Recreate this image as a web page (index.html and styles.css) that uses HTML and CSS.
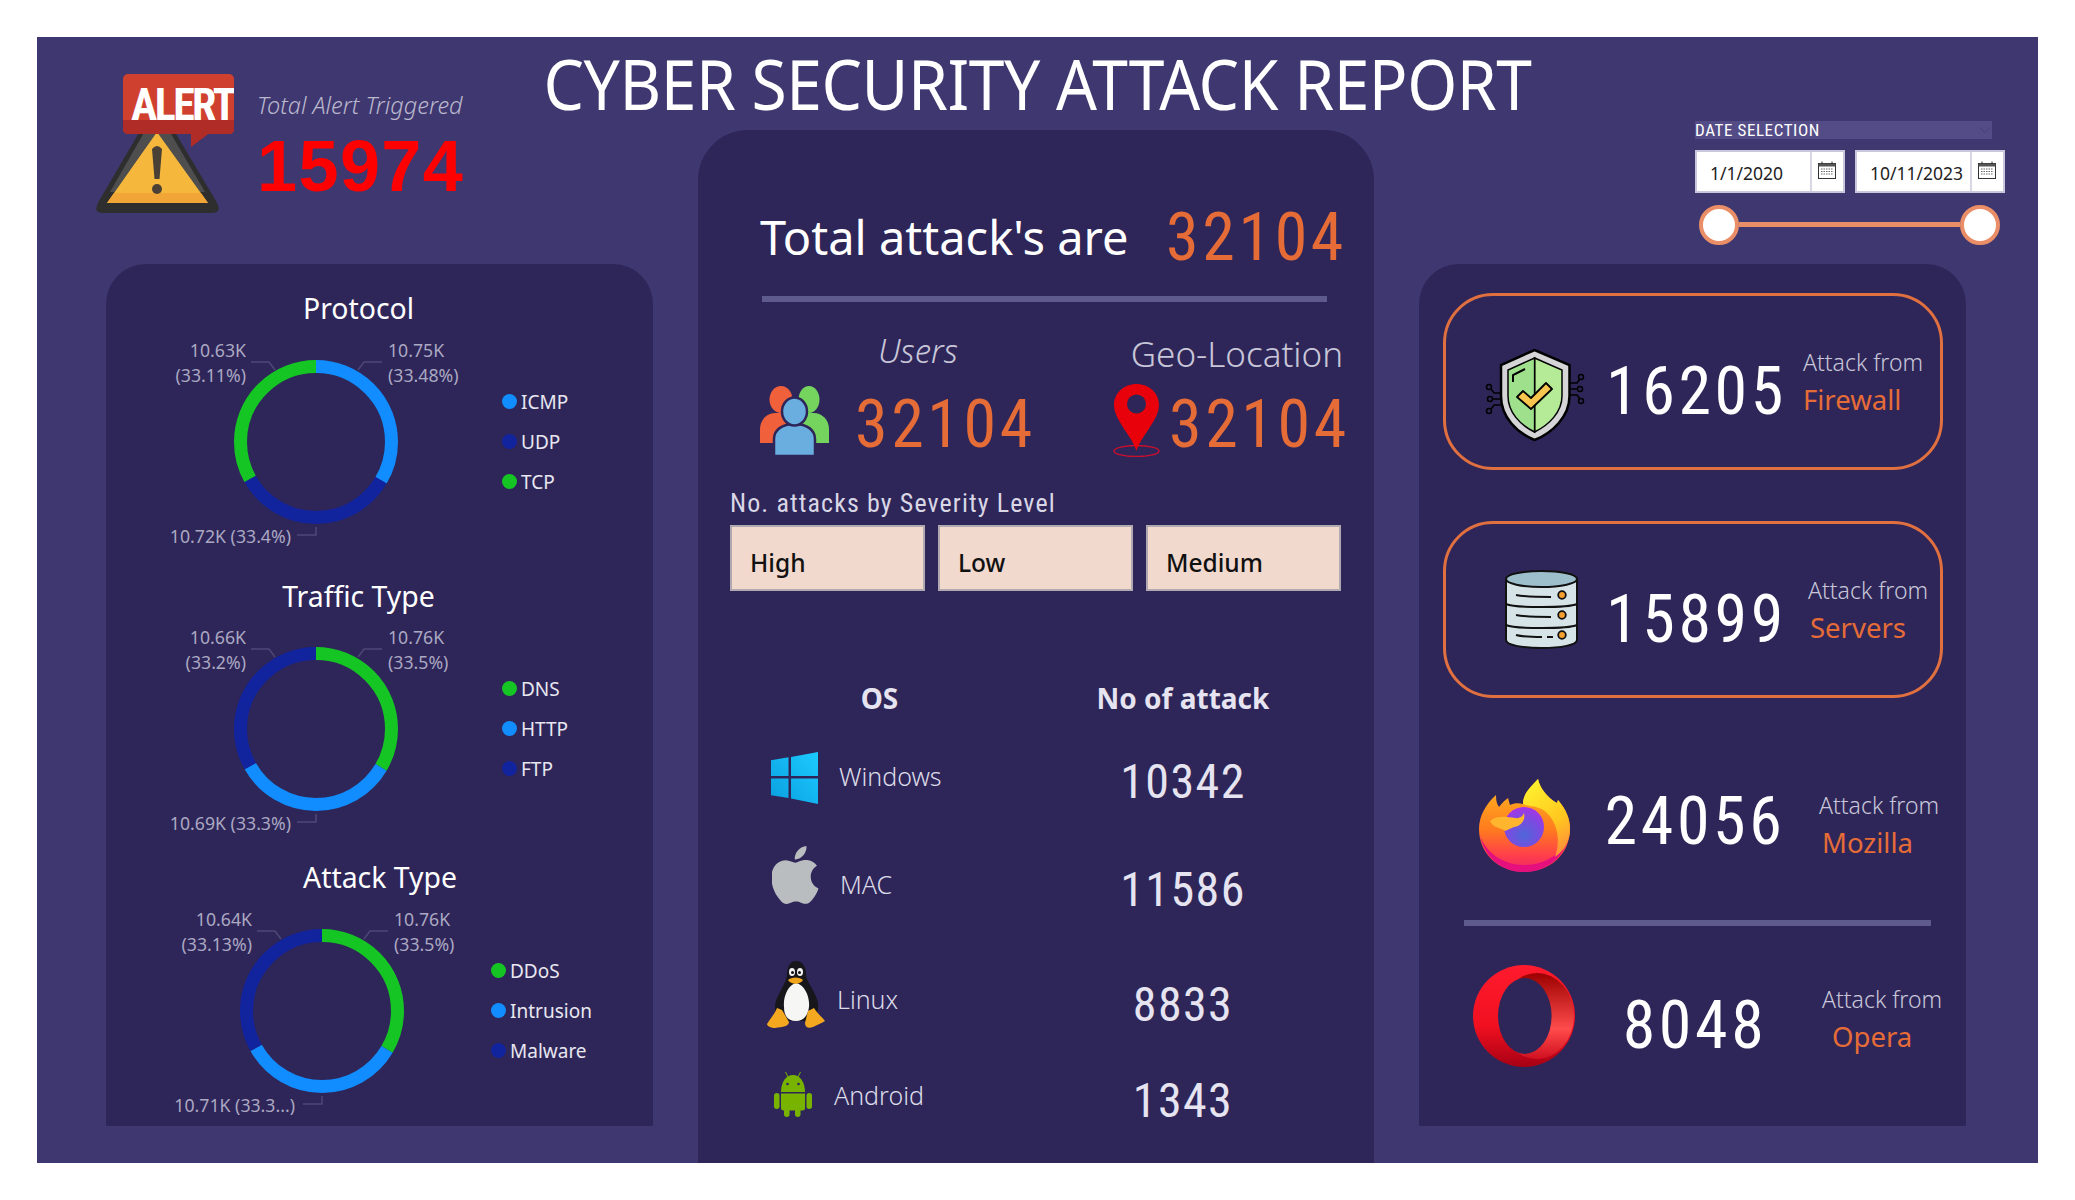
FILE: index.html
```html
<!DOCTYPE html>
<html lang="en">
<head>
    <meta charset="UTF-8">
    <title>Cyber Security Attack Report</title>
    <link rel="stylesheet" href="styles.css">
</head>
<body>
<div class="report">
    <h1 class="report-title">CYBER SECURITY ATTACK REPORT</h1>

    <!-- alert summary -->
    <div class="alert">
        <svg class="alert-icon" viewBox="0 0 139 139">
            <path d="M62 28 L4 127 Q-3 139 8 139 L117 139 Q128 139 121 127 Z" fill="#2e2e2e"/>
            <path d="M62 36 L15 118 L110 118 Z" fill="#4e4e4e"/>
            <path d="M62 58 L12 129 L113 129 Z" fill="#f5b83d"/>
            <path d="M19 119 L106 119 L113 129 L12 129 Z" fill="#f0a536"/>
            <path d="M57 75 Q62 69 67 75 L64.500 105 L59.500 105 Z" fill="#4a4036"/>
            <circle cx="62" cy="115" r="5" fill="#4a4036"/>
            <path d="M96 58 L96 73 L116 58 Z" fill="#b02c26"/>
            <rect x="28" y="0" width="111" height="60" rx="5" fill="#d0402f"/>
            <path d="M28 46 H139 V55 Q139 60 134 60 H33 Q28 60 28 55 Z" fill="#b02c26"/>
            <text class="alert-word" x="36" y="46">ALERT</text>
        </svg>
        <div class="alert-text">
            <div class="alert-label">Total Alert Triggered</div>
            <div class="alert-count">15974</div>
        </div>
    </div>

    <!-- date slicer -->
    <div class="date-slicer">
        <div class="slicer-head">DATE SELECTION
            <svg class="slicer-chevron" viewBox="0 0 14 8"><path d="M1 1 L7 7 L13 1" fill="none" stroke="#4d4580" stroke-width="1.500"/></svg>
        </div>
        <div class="date-inputs">
            <div class="date-box">
                <span class="date-value">1/1/2020</span>
                <span class="date-cal">
                    <svg viewBox="0 0 18 18"><use href="#calendar"/></svg>
                </span>
            </div>
            <div class="date-box">
                <span class="date-value">10/11/2023</span>
                <span class="date-cal">
                    <svg viewBox="0 0 18 18"><use href="#calendar"/></svg>
                </span>
            </div>
        </div>
        <div class="slider">
            <span class="slider-thumb"></span>
            <span class="slider-track"></span>
            <span class="slider-thumb"></span>
        </div>
    </div>

    <!-- left panel: donut charts -->
    <section class="panel panel-left">
        <div class="chart">
            <h2 class="chart-title">Protocol</h2>
            <div class="chart-body">
                <svg class="donut" viewBox="0 0 380 215">
                    <g class="slices">
                        <circle pathLength="100" stroke="#118dff" stroke-dasharray="33.48 66.52" stroke-dashoffset="0"/>
                        <circle pathLength="100" stroke="#12239e" stroke-dasharray="33.4 66.6" stroke-dashoffset="-33.48"/>
                        <circle pathLength="100" stroke="#15c524" stroke-dasharray="33.12 66.88" stroke-dashoffset="-66.88"/>
                    </g>
                    <path class="leader" d="M141 28 H159 L165 36 M272 28 H254 L248 36 M206 193 V201 H187"/>
                    <text class="data-label end" x="136" y="23">10.63K</text>
                    <text class="data-label end" x="136" y="48">(33.11%)</text>
                    <text class="data-label" x="278" y="23">10.75K</text>
                    <text class="data-label" x="278" y="48">(33.48%)</text>
                    <text class="data-label end" x="181" y="209">10.72K (33.4%)</text>
                </svg>
                <ul class="legend">
                    <li><i class="dot dot-blue"></i>ICMP</li>
                    <li><i class="dot dot-navy"></i>UDP</li>
                    <li><i class="dot dot-green"></i>TCP</li>
                </ul>
            </div>
        </div>

        <div class="chart chart-traffic">
            <h2 class="chart-title">Traffic Type</h2>
            <div class="chart-body">
                <svg class="donut" viewBox="0 0 380 215">
                    <g class="slices">
                        <circle pathLength="100" stroke="#15c524" stroke-dasharray="33.5 66.5" stroke-dashoffset="0"/>
                        <circle pathLength="100" stroke="#118dff" stroke-dasharray="33.3 66.7" stroke-dashoffset="-33.5"/>
                        <circle pathLength="100" stroke="#12239e" stroke-dasharray="33.2 66.8" stroke-dashoffset="-66.8"/>
                    </g>
                    <path class="leader" d="M141 28 H159 L165 36 M272 28 H254 L248 36 M206 193 V201 H187"/>
                    <text class="data-label end" x="136" y="23">10.66K</text>
                    <text class="data-label end" x="136" y="48">(33.2%)</text>
                    <text class="data-label" x="278" y="23">10.76K</text>
                    <text class="data-label" x="278" y="48">(33.5%)</text>
                    <text class="data-label end" x="181" y="209">10.69K (33.3%)</text>
                </svg>
                <ul class="legend">
                    <li><i class="dot dot-green"></i>DNS</li>
                    <li><i class="dot dot-blue"></i>HTTP</li>
                    <li><i class="dot dot-navy"></i>FTP</li>
                </ul>
            </div>
        </div>

        <div class="chart chart-attack">
            <h2 class="chart-title">Attack Type</h2>
            <div class="chart-body">
                <svg class="donut" viewBox="-6 0 380 215">
                    <g class="slices">
                        <circle pathLength="100" stroke="#15c524" stroke-dasharray="33.5 66.5" stroke-dashoffset="0"/>
                        <circle pathLength="100" stroke="#118dff" stroke-dasharray="33.37 66.63" stroke-dashoffset="-33.5"/>
                        <circle pathLength="100" stroke="#12239e" stroke-dasharray="33.13 66.87" stroke-dashoffset="-66.87"/>
                    </g>
                    <path class="leader" d="M141 28 H159 L165 36 M272 28 H254 L248 36 M206 193 V201 H187"/>
                    <text class="data-label end" x="136" y="23">10.64K</text>
                    <text class="data-label end" x="136" y="48">(33.13%)</text>
                    <text class="data-label" x="278" y="23">10.76K</text>
                    <text class="data-label" x="278" y="48">(33.5%)</text>
                    <text class="data-label end" x="179" y="209">10.71K (33.3...)</text>
                </svg>
                <ul class="legend">
                    <li><i class="dot dot-green"></i>DDoS</li>
                    <li><i class="dot dot-blue"></i>Intrusion</li>
                    <li><i class="dot dot-navy"></i>Malware</li>
                </ul>
            </div>
        </div>
    </section>

    <!-- center panel: totals, severity, os table -->
    <section class="panel panel-center">
        <div class="total-row">
            <span class="total-label">Total attack's are</span>
            <span class="num num-xl orange">32104</span>
        </div>
        <div class="rule"></div>

        <div class="kpis">
            <div class="kpi">
                <div class="kpi-label kpi-users">Users</div>
                <div class="kpi-value">
                    <svg class="icon-users" viewBox="0 0 69 70">
                        <ellipse cx="21" cy="13.500" rx="11.500" ry="13.500" fill="#f0603a"/>
                        <path d="M0 57 V43 C0 33 8 27 15 27 H28 V57 Z" fill="#f0603a"/>
                        <ellipse cx="49" cy="13.500" rx="10.500" ry="13.500" fill="#74d45e"/>
                        <path d="M69 57 V43 C69 33 61 27 54 27 H41 V57 Z" fill="#74d45e"/>
                        <path d="M14 70 V53 C14 44 22 38 34.500 38 C47 38 55 44 55 53 V70 Z" fill="#6aaee0" stroke="#2e2659" stroke-width="2.500"/>
                        <ellipse cx="34.500" cy="25.500" rx="12.500" ry="14" fill="#6aaee0" stroke="#2e2659" stroke-width="2.500"/>
                    </svg>
                    <span class="num num-xl orange">32104</span>
                </div>
            </div>
            <div class="kpi kpi-geo">
                <div class="kpi-label">Geo-Location</div>
                <div class="kpi-value">
                    <svg class="icon-pin" viewBox="0 0 47 73">
                        <ellipse cx="23.500" cy="67" rx="22.500" ry="5.500" fill="none" stroke="#c8102e" stroke-width="1.500"/>
                        <path d="M23.500 67 C19 52 1 36 1 21 C1 9 11 0 23.500 0 C36 0 46 9 46 21 C46 36 28 52 23.500 67 Z" fill="#e8000a"/>
                        <circle cx="23.500" cy="20" r="9.500" fill="#2e2659"/>
                    </svg>
                    <span class="num num-xl orange">32104</span>
                </div>
            </div>
        </div>

        <div class="severity-title">No. attacks by Severity Level</div>
        <div class="severity">
            <div class="severity-btn">High</div>
            <div class="severity-btn">Low</div>
            <div class="severity-btn">Medium</div>
        </div>

        <div class="os-table">
            <div class="os-head">OS</div>
            <div class="os-head">No of attack</div>

            <div class="os-name">
                <span class="os-slot">
                    <svg class="icon-win" viewBox="0 0 47.500 52">
                        <defs>
                            <linearGradient id="winFill" x1="1" y1="0" x2="0" y2="1">
                                <stop offset="0" stop-color="#1ccbff"/>
                                <stop offset="1" stop-color="#0a9fe0"/>
                            </linearGradient>
                        </defs>
                        <path d="M0 8.300 L17.500 5.300 V24 H0 Z M20 5 L47.500 0 V24 H20 Z M0 26.600 H17.500 V46 L0 43.300 Z M20 26.600 H47.500 V52 L20 46.500 Z" fill="url(#winFill)"/>
                    </svg>
                </span>
                Windows
            </div>
            <div class="num num-md os-count">10342</div>

            <div class="os-name">
                <span class="os-slot">
                    <svg class="icon-apple" viewBox="2.500 0 19.500 24">
                        <path d="M12.152 6.896c-.948 0-2.415-1.078-3.96-1.04-2.04.027-3.91 1.183-4.961 3.014-2.117 3.675-.546 9.103 1.519 12.09 1.013 1.454 2.208 3.09 3.792 3.039 1.52-.065 2.09-.987 3.935-.987 1.831 0 2.35.987 3.96.948 1.637-.026 2.676-1.48 3.676-2.948 1.156-1.688 1.636-3.325 1.662-3.415-.039-.013-3.182-1.221-3.22-4.857-.026-3.04 2.48-4.494 2.597-4.559-1.429-2.09-3.623-2.324-4.39-2.376-2-.156-3.675 1.09-4.61 1.09zM15.53 3.83c.843-1.012 1.4-2.427 1.245-3.83-1.207.052-2.662.805-3.532 1.818-.78.896-1.454 2.338-1.273 3.714 1.338.104 2.715-.688 3.559-1.701" fill="#b9bdc0"/>
                    </svg>
                </span>
                <span class="os-mac">MAC</span>
            </div>
            <div class="num num-md os-count">11586</div>

            <div class="os-name">
                <span class="os-slot">
                    <svg class="icon-tux" viewBox="0 0 58 68">
                        <path d="M29 0 C36 0 39 6 39 13 C39 20 46 27 50 38 C53 47 50 56 44 60 H15 C8 56 6 46 10 37 C14 28 20 20 20 13 C20 6 23 0 29 0 Z" fill="#17171b"/>
                        <path d="M29 22 C38 24 43 36 42 46 C41 55 36 60 29 60 C21 60 17 55 17 46 C16 36 21 24 29 22 Z" fill="#f6f6f4"/>
                        <ellipse cx="25" cy="11" rx="3" ry="4" fill="#f4f4f4"/>
                        <ellipse cx="33" cy="11" rx="3" ry="4" fill="#f4f4f4"/>
                        <circle cx="25.500" cy="11.500" r="1.500" fill="#111"/>
                        <circle cx="32.500" cy="11.500" r="1.500" fill="#111"/>
                        <path d="M21 19 C24 15.500 33 15.500 36 19 C33 24 24 24 21 19 Z" fill="#f0a41c"/>
                        <path d="M10 47 L15 49 L22 61 C22 65 16 66 8 67 C4 67 0 65 0 63 C3 58 7 54 10 47 Z" fill="#f4a81f"/>
                        <path d="M47 47 L41 50 L38 62 C38 66 41 68 46 66 C50 64 55 62 58 60 C55 56 50 52 47 47 Z" fill="#f4a81f"/>
                    </svg>
                </span>
                <span class="os-linux">Linux</span>
            </div>
            <div class="num num-md os-count">8833</div>

            <div class="os-name">
                <span class="os-slot">
                    <svg class="icon-droid" viewBox="0 0 38 45">
                        <path d="M11.500 0 L14 5 M26.500 0 L24 5" stroke="#78b300" stroke-width="1"/>
                        <path d="M7 20 C7 10 12 3 19 3 C26 3 31 10 31 20 Z" fill="#78b300"/>
                        <circle cx="13.500" cy="12" r="1.300" fill="#2e2659"/>
                        <circle cx="24.500" cy="12" r="1.300" fill="#2e2659"/>
                        <path d="M7 21.500 H31 V36 Q31 38.500 28.500 38.500 H9.500 Q7 38.500 7 36 Z" fill="#78b300"/>
                        <rect x="0" y="21" width="5.500" height="16" rx="2.750" fill="#78b300"/>
                        <rect x="32.500" y="21" width="5.500" height="16" rx="2.750" fill="#78b300"/>
                        <rect x="10" y="36" width="5.500" height="9" rx="2.750" fill="#78b300"/>
                        <rect x="21" y="36" width="5.500" height="9" rx="2.750" fill="#78b300"/>
                    </svg>
                </span>
                <span class="os-android">Android</span>
            </div>
            <div class="num num-md os-count">1343</div>
        </div>
    </section>

    <!-- right panel: attack sources -->
    <section class="panel panel-right">
        <div class="stat card">
            <svg class="stat-icon icon-shield" viewBox="0 0 102 92">
                <g fill="none" stroke="#000" stroke-width="1.500">
                    <path d="M17 44 H10 L7 40 M17 50 H8 M17 56 H10 L7 60 M86 34 H93 L96 30 M86 40 H94 M86 46 H93 L96 50"/>
                    <circle cx="5" cy="38" r="2.500"/><circle cx="6" cy="50" r="2.500"/><circle cx="5" cy="62" r="2.500"/>
                    <circle cx="97" cy="28" r="2.500"/><circle cx="96" cy="40" r="2.500"/><circle cx="97" cy="52" r="2.500"/>
                </g>
                <path d="M50.600 1 L85.500 16 V47 C85.500 68 68 84 50.600 91 C33 84 17 68 17 47 V16 Z" fill="#d5d5d8" stroke="#000" stroke-width="2.500"/>
                <path d="M50.600 9 L78 21 V47 C78 63 65 76 50.600 83 Z" fill="#b5ea97" stroke="#000" stroke-width="1.500"/>
                <path d="M50.600 9 L24 21 V47 C24 63 36 76 50.600 83 Z" fill="#9ee08c" stroke="#000" stroke-width="1.500"/>
                <path d="M29 33 V26 L41 20" fill="none" stroke="#000" stroke-width="2"/>
                <path d="M33 48 L39 42 L47 49 L62 34 L68 40 L47 60 Z" fill="#f8c64f" stroke="#000" stroke-width="1.800" stroke-linejoin="round"/>
            </svg>
            <div class="num num-xl white stat-num">16205</div>
            <div class="stat-cap cap-firewall">
                <div class="cap-top">Attack from</div>
                <div class="cap-name">Firewall</div>
            </div>
        </div>

        <div class="stat card card-servers">
            <svg class="stat-icon icon-server" viewBox="0 0 73 79">
                <path d="M1 9 V70 C1 75 17 78 36.500 78 C56 78 72 75 72 70 V9 Z" fill="#d6e4e8" stroke="#111" stroke-width="2"/>
                <ellipse cx="36.500" cy="9" rx="35.500" ry="8" fill="#9dbfcc" stroke="#111" stroke-width="2"/>
                <path d="M1 34 C10 38 63 38 72 34 M1 55 C10 59 63 59 72 55" fill="none" stroke="#111" stroke-width="2"/>
                <path d="M11 25 C20 27 38 27 46 27 M11 45 C20 47 38 47 46 47 M11 65 C18 67 30 67 37 67 M42 67 H48" fill="none" stroke="#111" stroke-width="2"/>
                <g fill="#f5a030" stroke="#111" stroke-width="1.800">
                    <circle cx="57" cy="25" r="3.800"/><circle cx="57" cy="45" r="3.800"/><circle cx="57" cy="65" r="3.800"/>
                </g>
            </svg>
            <div class="num num-xl white stat-num">15899</div>
            <div class="stat-cap cap-servers">
                <div class="cap-top">Attack from</div>
                <div class="cap-name">Servers</div>
            </div>
        </div>

        <div class="stat stat-mozilla">
            <svg class="stat-icon icon-firefox" viewBox="0 0 91 93">
                <defs>
                    <linearGradient id="ffBody" x1="0.500" y1="0.100" x2="0.500" y2="1">
                        <stop offset="0" stop-color="#ffb01f"/>
                        <stop offset="0.500" stop-color="#ff7a1f"/>
                        <stop offset="0.800" stop-color="#ff3f4a"/>
                        <stop offset="1" stop-color="#f0246a"/>
                    </linearGradient>
                    <linearGradient id="ffWrap" x1="0.300" y1="0" x2="0.700" y2="1">
                        <stop offset="0" stop-color="#fff12e"/>
                        <stop offset="0.600" stop-color="#ffc71f"/>
                        <stop offset="1" stop-color="#ff8f3a"/>
                    </linearGradient>
                    <radialGradient id="ffGlobe" cx="0.500" cy="0.700" r="0.750">
                        <stop offset="0" stop-color="#4f66d8"/>
                        <stop offset="0.550" stop-color="#7b4be0"/>
                        <stop offset="1" stop-color="#b030e8"/>
                    </radialGradient>
                </defs>
                <path d="M59 0 C61 10 70 20 78 24 L79 21 C87 30 91 40 91 50 C91 76 70 93 45 93 C20 93 0 75 0 50 C0 38 6 26 17 16 C17 22 18 25 20 28 C23 24 26 21 29 19 L31 26 C35 24 40 24 44 25 C44 14 52 8 59 0 Z" fill="url(#ffBody)"/>
                <path d="M1 56 C5 78 23 93 45 93 C67 93 86 78 90 56 C85 73 68 86 45 86 C24 86 6 73 1 56 Z" fill="#e5107e"/>
                <path d="M59 0 C61 10 70 20 78 24 L79 21 C87 30 91 40 91 50 C91 62 85 72 76 78 C82 60 78 44 68 34 C60 26 50 28 44 25 C44 14 52 8 59 0 Z" fill="url(#ffWrap)"/>
                <circle cx="45" cy="48" r="20" fill="url(#ffGlobe)"/>
                <path d="M11 42 C18 36 28 38 36 39 C42 40 44 36 45 34 C47 41 42 47 35 48 L26 52 C22 48 15 50 11 42 Z" fill="#ffb52e"/>
            </svg>
            <div class="num num-xl white stat-num">24056</div>
            <div class="stat-cap cap-mozilla">
                <div class="cap-top">Attack from</div>
                <div class="cap-name">Mozilla</div>
            </div>
        </div>

        <div class="rule rule-right"></div>

        <div class="stat stat-opera">
            <svg class="stat-icon icon-opera" viewBox="0 0 102 102">
                <defs>
                    <linearGradient id="opOuter" x1="0" y1="0" x2="0" y2="1">
                        <stop offset="0" stop-color="#ff1b2d"/>
                        <stop offset="0.600" stop-color="#f01020"/>
                        <stop offset="1" stop-color="#a70014"/>
                    </linearGradient>
                    <linearGradient id="opInner" x1="0" y1="0" x2="0" y2="1">
                        <stop offset="0" stop-color="#9c0000"/>
                        <stop offset="0.650" stop-color="#ff4b4b"/>
                        <stop offset="1" stop-color="#d01020"/>
                    </linearGradient>
                </defs>
                <circle cx="51" cy="51" r="51" fill="url(#opOuter)"/>
                <ellipse cx="64" cy="51" rx="37" ry="43" fill="url(#opInner)"/>
                <ellipse cx="51.800" cy="51" rx="26.800" ry="38" fill="#2e2659"/>
            </svg>
            <div class="num num-xl white stat-num">8048</div>
            <div class="stat-cap cap-opera">
                <div class="cap-top">Attack from</div>
                <div class="cap-name">Opera</div>
            </div>
        </div>
    </section>
</div>

<!-- shared calendar glyph -->
<svg class="sprite" width="0" height="0">
    <symbol id="calendar" viewBox="0 0 18 18">
        <rect x="0.500" y="2.500" width="17" height="15" fill="#fff" stroke="#333"/>
        <rect x="0.500" y="2.500" width="17" height="3" fill="#555"/>
        <path d="M4 0.500 V3 M14 0.500 V3" stroke="#333"/>
        <path d="M3 8 H15 M3 10.500 H15 M3 13 H15" stroke="#666" stroke-dasharray="1.500 1"/>
    </symbol>
</svg>
</body>
</html>
```

FILE: styles.css
```css
/* base */
* {
    box-sizing: border-box;
}

body {
    margin: 0;
    background: #fff;
    font-family: "Noto Sans", "Open Sans", sans-serif;
    color: #fff;
}

h1, h2, ul {
    margin: 0;
    padding: 0;
}

.sprite {
    display: block;
}

svg {
    flex: none;
}

/* report frame: three columns, top band overlaps title */
.report {
    width: 2001px;
    height: 1126px;
    margin: 37px 0 0 37px;
    padding-left: 69px;
    background: #3f3770;
    display: grid;
    grid-template-columns: 547px 676px 547px;
    grid-template-rows: 93px 134px 1fr;
    column-gap: 45px;
}

.report-title {
    grid-column: 1 / 4;
    grid-row: 1;
    margin-left: -69px;
    width: 2001px;
    text-align: center;
    font-size: 69px;
    font-weight: 400;
    line-height: 92px;
    letter-spacing: -0.5px;
    transform: scaleX(0.93);
}

/* shared number style */
.num {
    font-family: Roboto, sans-serif;
    font-stretch: 75%;
    font-weight: 400;
}

.num-xl {
    font-size: 66px;
    letter-spacing: 3.6px;
    line-height: 64px;
    padding-top: 8px;
}

.num-md {
    font-size: 48px;
    letter-spacing: 1.4px;
    line-height: 50px;
}

.orange {
    color: #e66c37;
}

.white {
    color: #fff;
}

/* alert */
.alert {
    grid-column: 1;
    grid-row: 1 / 3;
    display: flex;
    gap: 23px;
    margin: 37px 0 0 -11px;
}

.alert-icon {
    width: 139px;
    height: 139px;
    flex: none;
}

.alert-word {
    font-family: Roboto, sans-serif;
    font-stretch: 75%;
    font-weight: 700;
    font-size: 44px;
    letter-spacing: -2.6px;
    fill: #fff;
}

.alert-text {
    padding-top: 15px;
}

.alert-label {
    font-size: 23.500px;
    font-style: italic;
    font-weight: 300;
    line-height: 32px;
    color: #bab8cc;
}

.alert-count {
    margin-top: 9px;
    font-family: "Liberation Sans", sans-serif;
    font-size: 72px;
    font-weight: 700;
    line-height: 72px;
    letter-spacing: 1.400px;
    color: #ff0000;
}

/* date slicer */
.date-slicer {
    grid-column: 3;
    grid-row: 1 / 3;
    margin: 83.500px 0 0 276px;
    width: 310px;
}

.slicer-head {
    width: 297px;
    height: 18px;
    background: #544c86;
    font-family: Roboto, sans-serif;
    font-stretch: 80%;
    font-size: 17px;
    line-height: 18px;
    letter-spacing: 0.6px;
    display: flex;
    justify-content: space-between;
    align-items: center;
    padding-right: 1px;
}

.slicer-chevron {
    width: 12px;
    height: 8px;
}

.date-inputs {
    display: flex;
    gap: 10px;
    margin-top: 11px;
}

.date-box {
    width: 150px;
    height: 43px;
    display: flex;
    background: #fff;
    border: 2px solid #c9c7dc;
    color: #222;
}

.date-value {
    flex: 1;
    padding: 8px 0 0 13px;
    font-size: 17.500px;
    line-height: 26px;
}

.date-cal {
    width: 33px;
    border-left: 2px solid #d8d7e2;
    padding: 9px 0 0 6px;
}

.date-cal svg {
    display: block;
    width: 18px;
    height: 18px;
}

.slider {
    display: flex;
    align-items: center;
    width: 301px;
    margin: 12px 0 0 4px;
}

.slider-thumb {
    width: 40px;
    height: 40px;
    flex: none;
    background: #fff;
    border: 4px solid #e98e66;
    border-radius: 50%;
}

.slider-track {
    flex: 1;
    height: 5px;
    background: #e98e66;
}

/* panels */
.panel {
    grid-row: 3;
    background: #2e2659;
    border-radius: 40px 40px 0 0;
    height: 862px;
}

.panel-left {
    grid-column: 1;
    padding-top: 26px;
}

.panel-center {
    grid-column: 2;
    grid-row: 2 / 4;
    height: 1033px;
    border-radius: 50px 50px 0 0;
    padding: 74px 34px 0 31px;
}

.panel-right {
    grid-column: 3;
    padding: 29px 0 0 24px;
}

/* donut charts */
.chart-traffic {
    margin-top: 29px;
}

.chart-attack {
    margin-top: 23px;
}

.chart-title {
    width: 505px;
    text-align: center;
    font-size: 28.400px;
    font-weight: 400;
    line-height: 36px;
}

.chart-attack .chart-title {
    width: 548px;
}

.chart-body {
    display: flex;
    align-items: center;
    margin-top: 8px;
    padding-left: 4px;
}

.chart-traffic .chart-body {
    margin-top: 7px;
}

.donut {
    width: 380px;
    height: 215px;
    flex: none;
}

.slices circle {
    cx: 206px;
    cy: 108px;
    r: 75.500px;
    fill: none;
    stroke-width: 13;
    transform: rotate(-90deg);
    transform-origin: 206px 108px;
}

.leader {
    fill: none;
    stroke: #4d4775;
    stroke-width: 1.500;
}

.data-label {
    font-size: 17.700px;
    fill: #aba8c2;
}

.data-label.end {
    text-anchor: end;
}

.legend {
    list-style: none;
    margin-left: 12px;
}

.chart-attack .legend {
    margin-left: 1px;
}

.legend li {
    display: flex;
    align-items: center;
    gap: 4px;
    height: 40px;
    font-size: 19px;
    color: #e8e7f0;
}

.dot {
    width: 15px;
    height: 15px;
    border-radius: 50%;
}

.dot-blue {
    background: #118dff;
}

.dot-navy {
    background: #12239e;
}

.dot-green {
    background: #15c524;
}

/* center panel */
.total-row {
    display: flex;
    justify-content: space-between;
    align-items: center;
    margin: 0 -7px 0 31px;
    height: 64px;
}

.total-row .num {
    padding-top: 4px;
}

.total-label {
    font-size: 47px;
    font-weight: 400;
    line-height: 64px;
    padding-top: 2px;
}

.rule {
    height: 6px;
    background: #5f5a8e;
}

.panel-center .rule {
    width: 565px;
    margin: 28px 0 0 33px;
}

.kpis {
    display: grid;
    grid-template-columns: 353px 230px;
    margin: 30px 0 0 31px;
}

.kpi-label {
    font-size: 35px;
    font-weight: 300;
    line-height: 44px;
    height: 52px;
    color: #c8c6d8;
}

.kpi-users {
    font-size: 33px;
    font-style: italic;
    padding-left: 118px;
    margin-top: -3px;
    margin-bottom: 3px;
}

.kpi-geo .kpi-label {
    text-align: right;
}

.kpi-value {
    display: flex;
    align-items: center;
    gap: 26px;
    height: 73px;
}

.kpi-geo .kpi-value {
    gap: 9px;
}

.icon-users {
    width: 69px;
    height: 70px;
}

.icon-pin {
    width: 47px;
    height: 73px;
}

/* severity buttons */
.severity-title {
    margin: 31px 0 0 1px;
    font-family: Roboto, sans-serif;
    font-stretch: 80%;
    font-size: 26px;
    line-height: 30px;
    letter-spacing: 1.1px;
    color: #d9d7e6;
}

.severity {
    display: grid;
    grid-template-columns: repeat(3, 195px);
    gap: 13px;
    margin: 7px 0 0 1px;
}

.severity-btn {
    height: 66px;
    background: #f2d9ce;
    border: 2px solid #b0a9b0;
    padding: 18px 0 0 18px;
    font-size: 24.500px;
    line-height: 36px;
    font-weight: 500;
    color: #111;
}

/* os table */
.os-table {
    display: grid;
    grid-template-columns: 301px 306px;
    grid-template-rows: 42px 108px 108px 122px 70px;
    align-items: center;
    margin-top: 89px;
}

.os-head {
    align-self: start;
    text-align: center;
    font-size: 28px;
    font-weight: 700;
    line-height: 36px;
    color: #e6e4f0;
}

.os-name {
    display: flex;
    align-items: center;
    padding-left: 37px;
    gap: 14px;
    font-size: 25px;
    font-weight: 300;
    color: #dcdbe8;
}

.os-slot {
    width: 59px;
    display: flex;
    justify-content: center;
}

.os-mac {
    margin-left: 1px;
}

.os-linux {
    margin-left: -2px;
}

.os-android {
    margin-left: -5px;
}

.os-count {
    text-align: center;
    padding-top: 12px;
    color: #e6e4f0;
}

.icon-win {
    width: 47.500px;
    height: 52px;
    margin: 4px 0 0 -2px;
}

.icon-apple {
    width: 47px;
    height: 58px;
    margin-bottom: 18px;
}

.icon-tux {
    width: 58px;
    height: 68px;
    margin-bottom: 8px;
}

.icon-droid {
    width: 38px;
    height: 45px;
    margin: 0 0 2px -5px;
}

/* right panel rows */
.stat {
    display: grid;
    grid-template-columns: 157px 190px 1fr;
    align-items: center;
    width: 500px;
}

.card {
    height: 177px;
    border: 3px solid #e0703f;
    border-radius: 50px;
}

.card-servers {
    margin-top: 51px;
}

.stat-mozilla {
    height: 190px;
    margin-top: 32px;
}

.stat-opera {
    height: 180px;
}

.rule-right {
    width: 467px;
    margin-left: 21px;
}

.stat-icon {
    justify-self: start;
}

.icon-shield {
    width: 102px;
    height: 92px;
    margin: 26px 0 0 38px;
}

.icon-server {
    width: 73px;
    height: 79px;
    margin-left: 59px;
}

.icon-firefox {
    width: 91px;
    height: 93px;
    margin-left: 36px;
}

.icon-opera {
    width: 102px;
    height: 102px;
    margin-left: 30px;
}

.stat-num {
    text-align: center;
    margin-left: -3px;
    padding-top: 20px;
}

.stat-mozilla .stat-num {
    margin-left: 0;
    padding-top: 0;
    padding-bottom: 7px;
}

.stat-opera .stat-num {
    margin-left: 0;
}

.stat-cap {
    font-size: 23px;
    line-height: 36px;
}

.cap-top {
    font-weight: 300;
    color: #c8c6d8;
}

.cap-name {
    font-size: 27.500px;
    line-height: 40px;
    color: #e66c37;
}

.cap-firewall {
    padding-left: 10px;
}

.cap-servers {
    padding-left: 15px;
}

.cap-servers .cap-name {
    margin-left: 2px;
}

.cap-mozilla {
    padding-left: 29px;
}

.cap-mozilla .cap-name {
    margin-left: 3px;
}

.cap-opera {
    padding: 6px 0 0 32px;
}

.cap-opera .cap-name {
    margin-left: 10px;
}
```
